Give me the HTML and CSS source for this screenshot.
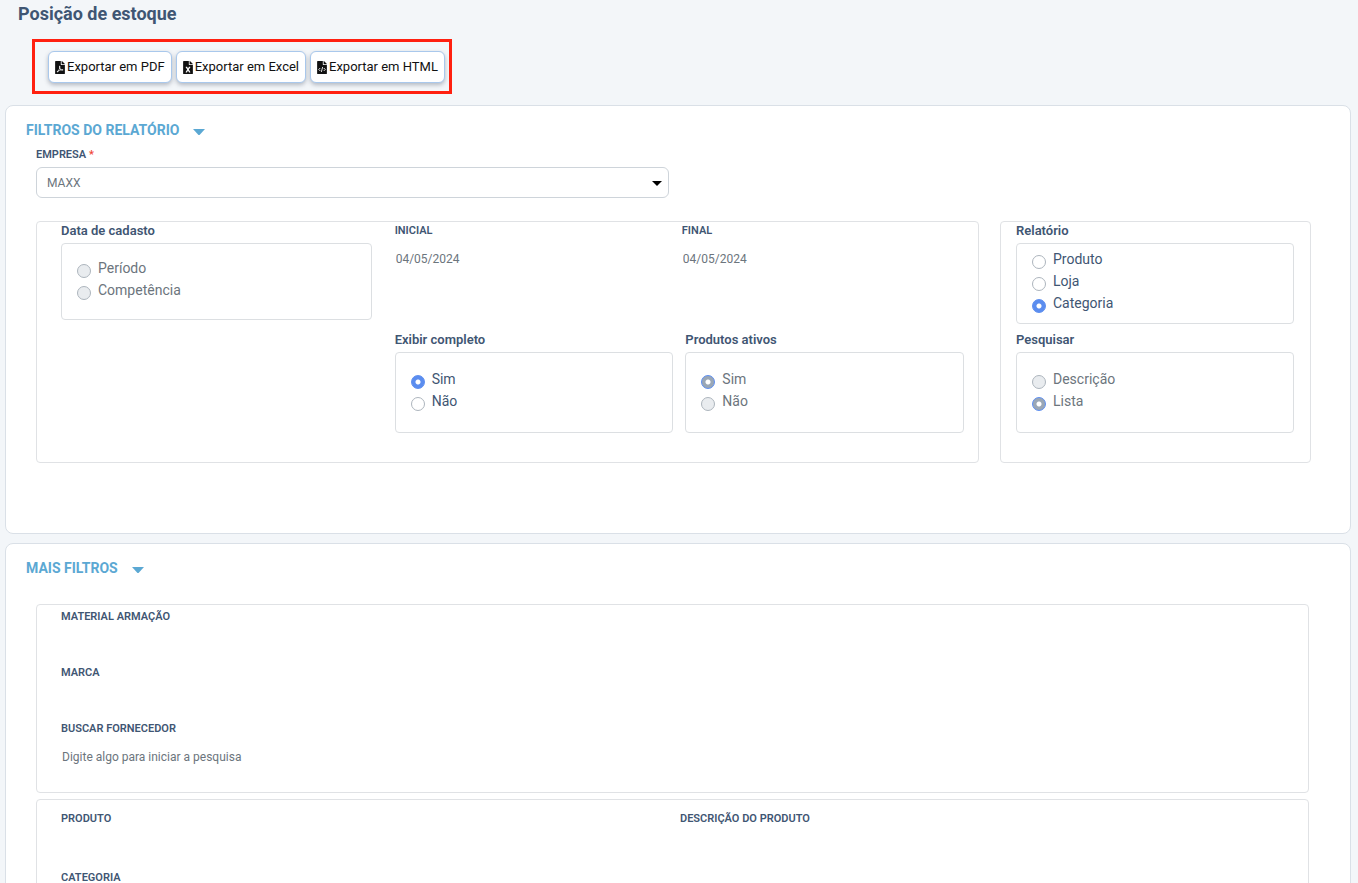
FILE: index.html
```html
<!DOCTYPE html>
<html lang="pt-BR">
<head>
<meta charset="utf-8">
<meta name="viewport" content="width=device-width, initial-scale=1">
<title>Posição de estoque</title>
<link rel="stylesheet" href="styles.css">
</head>
<body>
<main class="page">
  <h1 class="page-title">Posição de estoque</h1>

  <div class="toolbar">
    <button type="button" class="btn">
      <svg class="btn-icon" viewBox="0 0 384 512" aria-hidden="true"><path d="M181.9 256.1c-5-16-4.9-46.9-2-46.9 8.4 0 7.6 36.9 2 46.9zm-1.7 47.2c-7.7 20.2-17.3 43.3-28.4 62.7 18.3-7 39-17.2 62.9-21.9-12.7-9.6-24.9-23.4-34.5-40.8zM86.1 428.1c0 .8 13.2-5.4 34.9-40.2-6.7 6.3-29.1 24.5-34.9 40.2zM248 160h136v328c0 13.3-10.7 24-24 24H24c-13.3 0-24-10.7-24-24V24C0 10.7 10.7 0 24 0h200v136c0 13.2 10.8 24 24 24zm-8 171.8c-20-12.2-33.3-29-42.7-53.8 4.5-18.5 11.6-46.6 6.2-64.2-4.7-29.4-42.4-26.5-47.8-6.8-5 18.3-.4 44.1 8.1 77-11.6 27.6-28.7 64.6-40.8 85.8-.1 0-.1.1-.2.1-27.1 13.9-73.6 44.5-54.5 68 5.6 6.9 16 10 21.5 10 17.9 0 35.7-18 61.1-61.8 25.8-8.5 54.1-19.1 79-23.2 21.7 11.8 47.1 19.5 64 19.5 29.2 0 31.2-32 19.7-43.4-13.9-13.6-54.3-9.7-73.6-7.2zM377 105L279 7c-4.5-4.5-10.6-7-17-7h-6v128h128v-6.1c0-6.3-2.5-12.4-7-16.9zm-74.1 255.3c4.1-2.7-2.5-11.9-42.8-9 37.1 15.8 42.8 9 42.8 9z"/></svg>
      <span>Exportar em PDF</span>
    </button>
    <button type="button" class="btn">
      <svg class="btn-icon" viewBox="0 0 384 512" aria-hidden="true"><path d="M224 136V0H24C10.7 0 0 10.7 0 24v464c0 13.3 10.7 24 24 24h336c13.3 0 24-10.7 24-24V160H248c-13.2 0-24-10.8-24-24zm60.1 106.5L224 336l60.1 93.5c5.1 8-.6 18.5-10.1 18.5h-34.9c-4.4 0-8.5-2.4-10.6-6.3C208.9 405.5 192 373 192 373c-6.4 14.8-10 20-36.6 68.8-2.1 3.9-6.1 6.3-10.5 6.3H110c-9.5 0-15.2-10.5-10.1-18.5l60.3-93.5-60.3-93.5c-5.2-8 .6-18.5 10.1-18.5h34.8c4.4 0 8.5 2.4 10.6 6.3 26.1 48.8 20 33.6 36.6 68.5 0 0 6.1-11.7 36.6-68.5 2.1-3.9 6.2-6.3 10.6-6.3H274c9.5-.1 15.2 10.4 10.1 18.4zM384 121.9v6.1H256V0h6.1c6.4 0 12.5 2.5 17 7l97.9 98c4.5 4.5 7 10.6 7 16.9z"/></svg>
      <span>Exportar em Excel</span>
    </button>
    <button type="button" class="btn">
      <svg class="btn-icon" viewBox="0 0 384 512" aria-hidden="true"><path d="M224 136V0H24C10.7 0 0 10.7 0 24v464c0 13.3 10.7 24 24 24h336c13.3 0 24-10.7 24-24V160H248c-13.2 0-24-10.8-24-24zM384 121.9v6.1H256V0h6.1c6.4 0 12.5 2.5 17 7l97.9 98c4.5 4.5 7 10.6 7 16.9z"/><path class="btn-icon-cut" d="M123 276l-58 58 58 58M261 276l58 58-58 58M218 234l-52 198"/></svg>
      <span>Exportar em HTML</span>
    </button>
  </div>

  <section class="panel">
    <h2 class="panel-title">Filtros do relatório
      <svg class="panel-caret" viewBox="0 0 12 6" aria-hidden="true"><path d="M0 0h12L7 5.500q-1 1-2 0z"/></svg>
    </h2>
    <div class="panel-body">
      <div class="company-row">
        <div class="field">
          <label class="field-label" for="empresa">EMPRESA <span class="required">*</span></label>
          <div class="select-wrap">
            <select class="select" id="empresa"><option>MAXX</option></select>
            <svg class="select-caret" viewBox="0 0 10 5" aria-hidden="true"><path d="M0 0h10L5 5z"/></svg>
          </div>
        </div>
      </div>

      <div class="groups">
        <div class="group group-dates">
          <fieldset class="choice">
            <legend class="choice-title">Data de cadasto</legend>
            <div class="choice-box choice-box-short">
              <label class="option option-off"><input type="radio" name="data" disabled>Período</label>
              <label class="option option-off"><input type="radio" name="data" disabled>Competência</label>
            </div>
          </fieldset>
          <div class="dates-side">
            <div class="date-row">
              <div class="field">
                <label class="field-label" for="inicial">INICIAL</label>
                <input class="input" id="inicial" type="text" value="04/05/2024">
              </div>
              <div class="field">
                <label class="field-label" for="final">FINAL</label>
                <input class="input" id="final" type="text" value="04/05/2024">
              </div>
            </div>
            <div class="choice-row">
              <fieldset class="choice">
                <legend class="choice-title">Exibir completo</legend>
                <div class="choice-box">
                  <label class="option"><input type="radio" name="completo" checked>Sim</label>
                  <label class="option"><input type="radio" name="completo">Não</label>
                </div>
              </fieldset>
              <fieldset class="choice">
                <legend class="choice-title">Produtos ativos</legend>
                <div class="choice-box">
                  <label class="option option-off"><input type="radio" name="ativos" checked disabled>Sim</label>
                  <label class="option option-off"><input type="radio" name="ativos" disabled>Não</label>
                </div>
              </fieldset>
            </div>
          </div>
        </div>

        <div class="group group-report">
          <fieldset class="choice">
            <legend class="choice-title">Relatório</legend>
            <div class="choice-box choice-box-full">
              <label class="option"><input type="radio" name="relatorio">Produto</label>
              <label class="option"><input type="radio" name="relatorio">Loja</label>
              <label class="option"><input type="radio" name="relatorio" checked>Categoria</label>
            </div>
          </fieldset>
          <fieldset class="choice">
            <legend class="choice-title">Pesquisar</legend>
            <div class="choice-box">
              <label class="option option-off"><input type="radio" name="pesquisar" disabled>Descrição</label>
              <label class="option option-off"><input type="radio" name="pesquisar" checked disabled>Lista</label>
            </div>
          </fieldset>
        </div>
      </div>
    </div>
  </section>

  <section class="panel">
    <h2 class="panel-title">Mais filtros
      <svg class="panel-caret" viewBox="0 0 12 6" aria-hidden="true"><path d="M0 0h12L7 5.500q-1 1-2 0z"/></svg>
    </h2>
    <div class="panel-body more-body">
      <div class="group group-stack">
        <div class="field">
          <label class="field-label" for="material">MATERIAL ARMAÇÃO</label>
          <input class="input" id="material" type="text">
        </div>
        <div class="field">
          <label class="field-label" for="marca">MARCA</label>
          <input class="input" id="marca" type="text">
        </div>
        <div class="field">
          <label class="field-label" for="fornecedor">BUSCAR FORNECEDOR</label>
          <input class="input" id="fornecedor" type="text" placeholder="Digite algo para iniciar a pesquisa">
        </div>
      </div>
      <div class="group group-product">
        <div class="field">
          <label class="field-label" for="produto">PRODUTO</label>
          <input class="input" id="produto" type="text">
        </div>
        <div class="field">
          <label class="field-label" for="descricao">DESCRIÇÃO DO PRODUTO</label>
          <input class="input" id="descricao" type="text">
        </div>
        <div class="field">
          <label class="field-label" for="categoria">CATEGORIA</label>
          <input class="input" id="categoria" type="text">
        </div>
      </div>
    </div>
  </section>
</main>
</body>
</html>
```
FILE: styles.css
```css
* {
  box-sizing: border-box;
}

body {
  margin: 0;
  background: #f3f6f9;
  color: #3f5673;
  font-family: Roboto, "Liberation Sans", sans-serif;
  font-size: 12px;
}

.page {
  height: 100vh;
  overflow: hidden;
  padding: 3px 7px 0 5px;
}

.page-title {
  margin: 0 0 14px 13px;
  font-size: 18px;
  line-height: 22px;
  font-weight: 700;
}

.toolbar {
  display: flex;
  width: fit-content;
  gap: 4px;
  margin: 0 0 11px 27px;
  padding: 9px 4px 8px 13px;
  border: 3px solid #ff2010;
}

.btn {
  display: flex;
  align-items: center;
  gap: 2px;
  height: 32px;
  padding: 0 6px;
  border: 1px solid #a9c8ec;
  border-radius: 6px;
  background: #fff;
  box-shadow: 0 2px 4px rgba(60, 70, 90, 0.35);
  color: #111;
  font-family: inherit;
  font-size: 13px;
  line-height: 16px;
  white-space: nowrap;
}

.btn-icon {
  width: 10px;
  height: 13px;
  fill: #111;
}

.btn-icon-cut {
  fill: none;
  stroke: #fff;
  stroke-width: 34;
}

.panel {
  margin-bottom: 9px;
  padding: 14px 20px 70px;
  border: 1px solid #dae0e7;
  border-radius: 8px;
  background: #fff;
}

.panel-title {
  display: flex;
  align-items: center;
  gap: 14px;
  margin: 0;
  color: #5ba8d3;
  font-size: 14px;
  line-height: 20px;
  font-weight: 700;
  text-transform: uppercase;
}

.panel-caret {
  width: 12px;
  height: 6px;
  margin-top: 3px;
  fill: #5ba8d3;
}

.panel-body {
  padding: 6px 19px 0 10px;
}

.company-row {
  display: grid;
  grid-template-columns: 1fr 1fr;
  gap: 10px;
}

.field {
  display: flex;
  flex-direction: column;
  gap: 3px;
  min-width: 0;
}

.field-label {
  font-size: 11px;
  line-height: 18px;
  font-weight: 600;
}

.required {
  color: #f04438;
}

.input,
.select {
  width: 100%;
  height: 31px;
  margin: 0;
  border: 1px solid transparent;
  background: transparent;
  color: #6c757d;
  font-family: inherit;
  font-size: 12px;
}

.input {
  padding: 0;
}

.input::placeholder {
  color: #6c757d;
  opacity: 1;
}

.select-wrap {
  position: relative;
}

.select {
  display: block;
  padding: 0 24px 0 10px;
  border-color: #ced4da;
  border-radius: 6px;
  appearance: none;
}

.select-caret {
  position: absolute;
  top: 14px;
  right: 7px;
  width: 10px;
  height: 5px;
  fill: #000;
  pointer-events: none;
}

.groups {
  display: grid;
  grid-template-columns: 943fr 311fr;
  gap: 21px;
  margin-top: 23px;
}

.group {
  border: 1px solid #e0e2e5;
  border-radius: 4px;
}

.group-dates {
  display: grid;
  grid-template-columns: 311fr 570fr;
  align-items: start;
  gap: 23px;
  padding: 0 14px 29px 24px;
}

.dates-side {
  display: flex;
  flex-direction: column;
  gap: 57px;
}

.date-row {
  display: grid;
  grid-template-columns: 1fr 1fr;
  gap: 5px;
}

.choice-row {
  display: grid;
  grid-template-columns: 1fr 1fr;
  gap: 12px;
}

.group-report {
  display: flex;
  flex-direction: column;
  gap: 7px;
  padding: 0 16px 29px 15px;
}

.choice {
  min-width: 0;
  margin: 0;
  padding: 0;
  border: 0;
}

.choice-title {
  padding: 0 0 3px;
  font-size: 13px;
  line-height: 18px;
  font-weight: 600;
}

.choice-box {
  min-height: 81px;
  padding: 15px 15px 0;
  border: 1px solid #dcdfe2;
  border-radius: 4px;
}

.choice-box-short {
  min-height: 77px;
  padding-top: 13px;
}

.choice-box-full {
  padding-top: 4px;
}

.option {
  display: flex;
  gap: 7px;
  font-size: 14px;
  line-height: 22px;
}

.option-off {
  color: #6c757d;
}

.option input {
  flex: none;
  width: 14px;
  height: 14px;
  margin: 7px 0 0;
  border: 1px solid #adb5bd;
  border-radius: 50%;
  background: #fff;
  appearance: none;
}

.option input:checked {
  border-color: #5b8def;
  background: radial-gradient(circle, #fff 2px, #5b8def 3px) border-box;
}

.option input:disabled {
  background: #e9ecef;
}

.option input:checked:disabled {
  background: radial-gradient(circle, #fff 2px, #9aa7b6 3px);
}

.more-body {
  display: flex;
  flex-direction: column;
  gap: 6px;
  padding: 26px 21px 0 10px;
}

.group-stack {
  display: flex;
  flex-direction: column;
  gap: 4px;
  padding: 3px 9px 20px 24px;
}

.group-product {
  display: grid;
  grid-template-columns: 1fr 1fr;
  row-gap: 7px;
  padding: 10px 9px 20px 24px;
}
```
